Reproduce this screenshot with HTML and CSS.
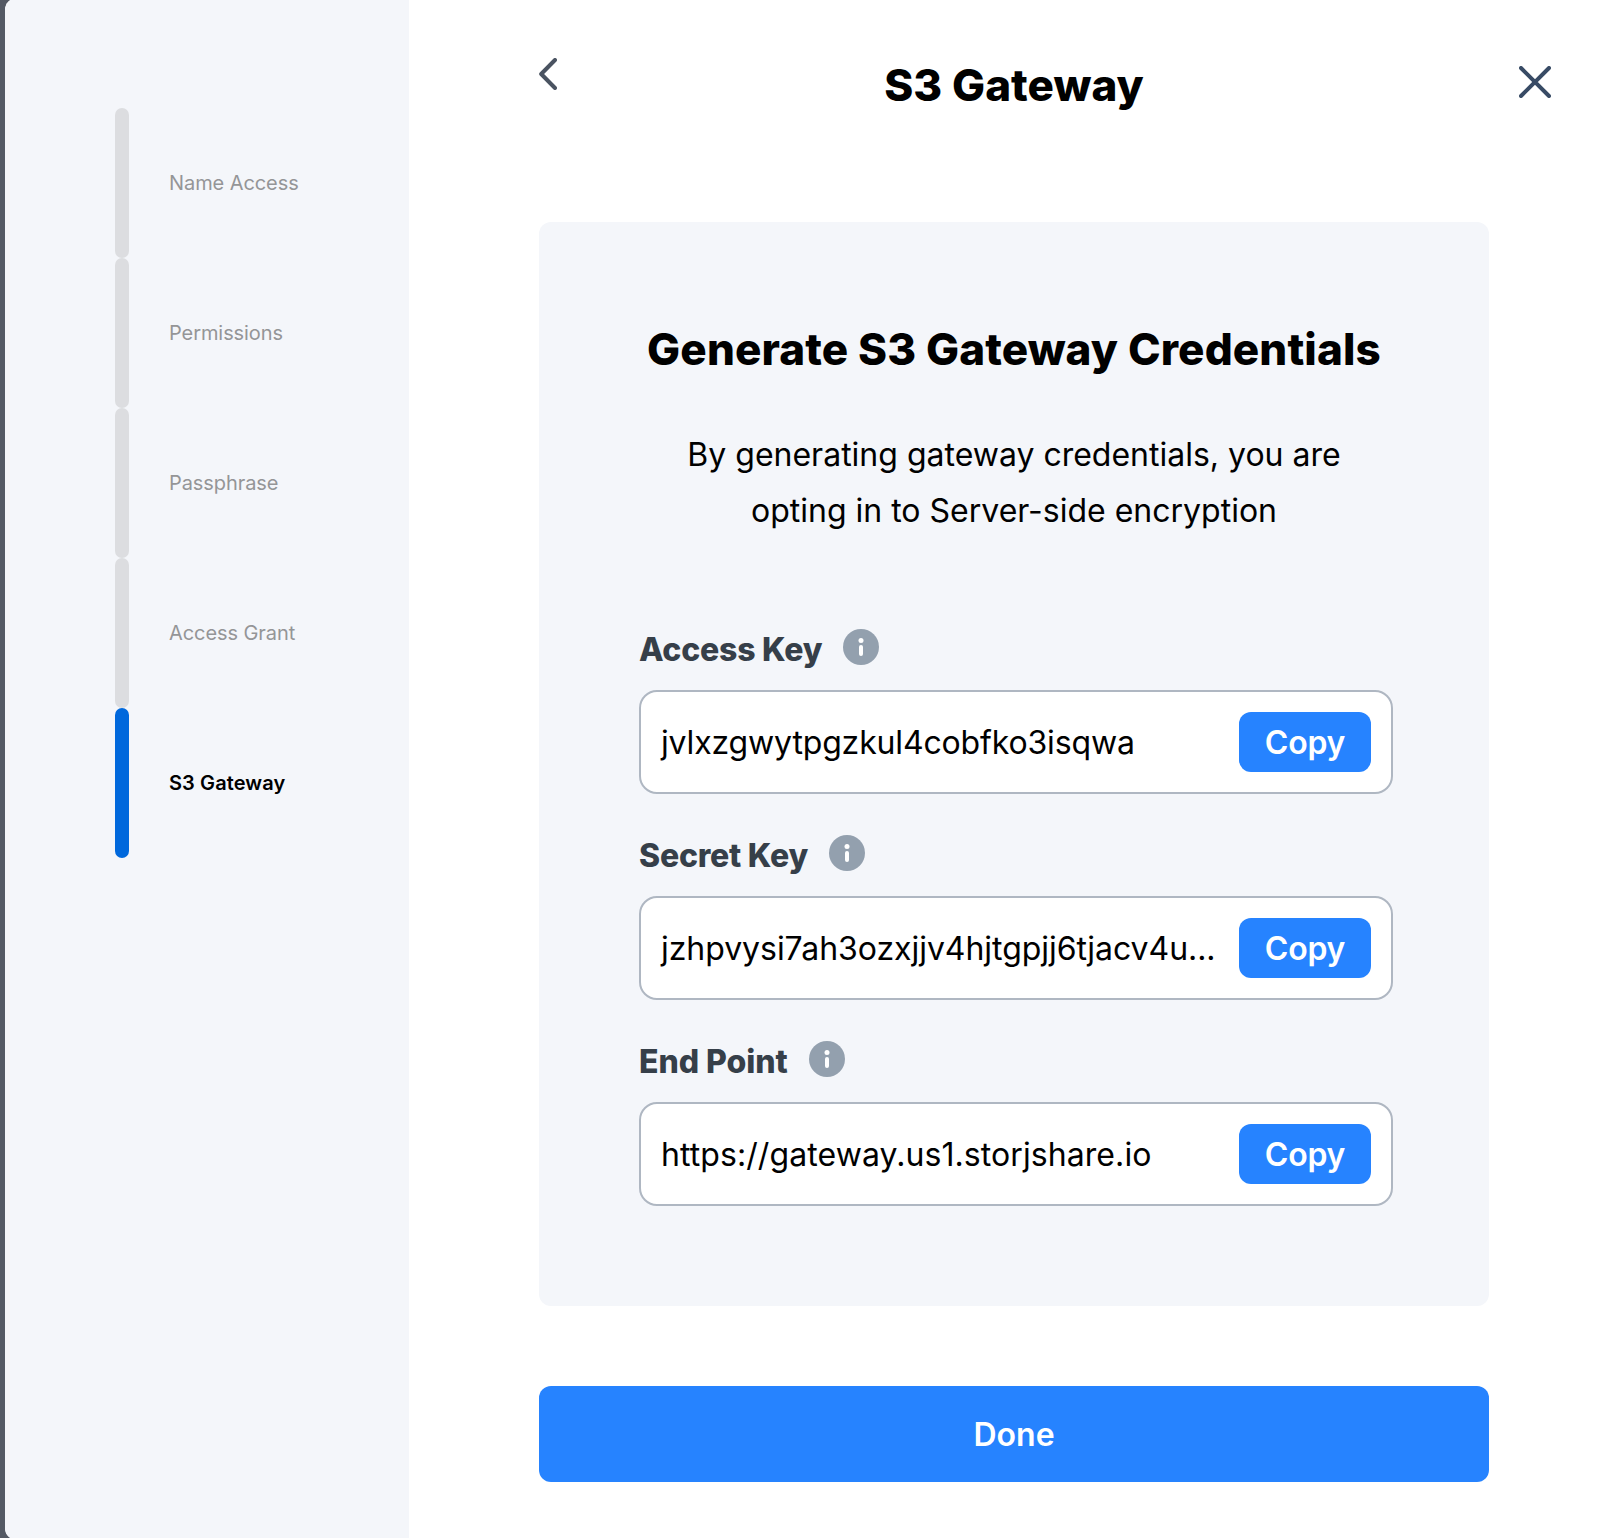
FILE: index.html
```html
<!DOCTYPE html>
<html lang="en">
<head>
<meta charset="utf-8">
<title>S3 Gateway</title>
<link rel="stylesheet" href="styles.css">
</head>
<body>
<div class="modal">
  <aside class="sidebar">
    <ol class="steps">
      <li class="step">Name Access</li>
      <li class="step">Permissions</li>
      <li class="step">Passphrase</li>
      <li class="step">Access Grant</li>
      <li class="step step-active">S3 Gateway</li>
    </ol>
  </aside>
  <main class="content">
    <header class="header">
      <button class="icon-button back" aria-label="Back">
        <svg width="18" height="32" viewBox="0 0 18 32"><path d="M16 2L2.2 16L16 30"/></svg>
      </button>
      <h1 class="title">S3 Gateway</h1>
      <button class="icon-button close" aria-label="Close">
        <svg width="32" height="32" viewBox="0 0 32 32"><path d="M2 2L30 30M30 2L2 30"/></svg>
      </button>
    </header>
    <section class="card">
      <h2 class="card-title">Generate S3 Gateway Credentials</h2>
      <p class="card-text">By generating gateway credentials, you are<br>opting in to Server-side encryption</p>
      <div class="field">
        <div class="label"><span class="label-tight">Access Key</span>
          <svg class="info" width="36" height="36" viewBox="0 0 36 36"><circle cx="18" cy="18" r="18"/><circle class="mark" cx="18" cy="11.5" r="2.5"/><rect class="mark" x="16" y="16" width="4" height="11" rx="2"/></svg>
        </div>
        <div class="box"><span class="value value-key">jvlxzgwytpgzkul4cobfko3isqwa</span><button class="copy">Copy</button></div>
      </div>
      <div class="field">
        <div class="label"><span class="label-tight">Secret Key</span>
          <svg class="info" width="36" height="36" viewBox="0 0 36 36"><circle cx="18" cy="18" r="18"/><circle class="mark" cx="18" cy="11.5" r="2.5"/><rect class="mark" x="16" y="16" width="4" height="11" rx="2"/></svg>
        </div>
        <div class="box"><span class="value value-secret">jzhpvysi7ah3ozxjjv4hjtgpjj6tjacv4u...</span><button class="copy">Copy</button></div>
      </div>
      <div class="field">
        <div class="label"><span>End Point</span>
          <svg class="info" width="36" height="36" viewBox="0 0 36 36"><circle cx="18" cy="18" r="18"/><circle class="mark" cx="18" cy="11.5" r="2.5"/><rect class="mark" x="16" y="16" width="4" height="11" rx="2"/></svg>
        </div>
        <div class="box"><span class="value value-url">https://gateway.us1.storjshare.io</span><button class="copy">Copy</button></div>
      </div>
    </section>
    <button class="done">Done</button>
  </main>
</div>
</body>
</html>
```
FILE: styles.css
```css
* { box-sizing: border-box; }

body {
  margin: 0;
  height: 1538px;
  overflow: hidden;
  background: #545a65;
  font-family: Inter, "Liberation Sans", sans-serif;
  color: #000;
}

button {
  border: 0;
  padding: 0;
  font: inherit;
}

.modal {
  display: flex;
  height: 1542px;
  margin: -2px 0 -2px 5px;
  border-radius: 12px 0 0 12px;
  overflow: hidden;
  background: #fff;
}

.sidebar {
  flex: 0 0 404px;
  padding: 110px 0 0 110px;
  background: #f4f6fa;
}

.steps {
  margin: 0;
  padding: 0;
  list-style: none;
}

.step {
  display: flex;
  align-items: center;
  gap: 40px;
  height: 150px;
  font-size: 20px;
  letter-spacing: -0.08px;
  color: #949597;
}

.step::before {
  content: "";
  width: 14px;
  height: 150px;
  border-radius: 7px;
  background: #dcdde0;
}

.step-active {
  font-weight: 600;
  letter-spacing: 0.1px;
  color: #000;
}

.step-active::before { background: #0068dc; }

.content {
  flex: 1;
  padding: 57px 63px 0 130px;
}

.header {
  display: grid;
  grid-template-columns: 18px 1fr 32px;
  align-items: start;
  height: 167px;
}

.icon-button {
  height: 32px;
  background: none;
}

.icon-button svg {
  display: block;
  fill: none;
  stroke-width: 4;
  stroke-linecap: round;
  stroke-linejoin: round;
}

.back { margin-top: 3px; stroke: #4a5361; }
.close { margin-top: 11px; stroke: #384b65; }

.title {
  width: 914px;
  margin: 0;
  font-size: 44px;
  font-weight: 800;
  line-height: 60px;
  letter-spacing: 0.08px;
  text-align: center;
}

.card {
  width: 950px;
  height: 1084px;
  padding: 97px 96px 0 100px;
  border-radius: 12px;
  background: #f4f6fa;
}

.card-title {
  margin: 0 0 48px -4px;
  font-size: 44px;
  font-weight: 800;
  line-height: 60px;
  letter-spacing: 0.12px;
  text-align: center;
  white-space: nowrap;
}

.card-text {
  margin: 0 0 90px -4px;
  font-size: 32px;
  line-height: 56px;
  text-align: center;
}

.field { margin-bottom: 41px; }

.label {
  display: flex;
  gap: 21px;
  height: 41px;
  margin-bottom: 20px;
  font-size: 32px;
  font-weight: 800;
  line-height: 41px;
  letter-spacing: -0.06px;
  color: #363f49;
}

.label-tight { letter-spacing: -0.22px; }

.info { fill: #93a0ae; }
.mark { fill: #fff; }

.box {
  display: flex;
  align-items: center;
  justify-content: space-between;
  height: 104px;
  padding: 0 20px;
  border: 2px solid #afb7c2;
  border-radius: 18px;
  background: #fff;
}

.value {
  font-size: 32px;
  white-space: nowrap;
}

.value-key { letter-spacing: -0.15px; }
.value-secret { letter-spacing: -0.04px; }
.value-url { letter-spacing: 0.08px; }

.copy {
  width: 132px;
  height: 60px;
  border-radius: 12px;
  background: #2683ff;
  color: #fff;
  font-size: 32px;
  font-weight: 600;
  letter-spacing: -0.2px;
}

.done {
  display: block;
  width: 950px;
  height: 96px;
  margin-top: 80px;
  border-radius: 12px;
  background: #2683ff;
  color: #fff;
  font-size: 32px;
  font-weight: 600;
}
```
